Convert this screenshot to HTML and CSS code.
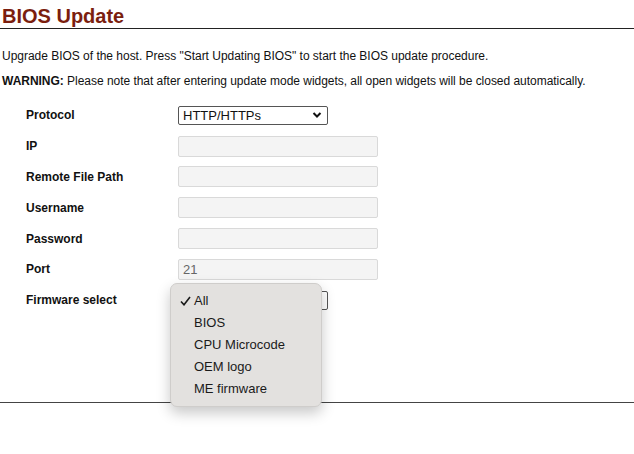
FILE: index.html
```html
<!DOCTYPE html>
<html>
<head>
<meta charset="utf-8">
<link rel="stylesheet" href="styles.css">
</head>
<body>
<div class="page">
  <h1 class="title">BIOS Update</h1>
  <p class="desc">Upgrade BIOS of the host. Press "Start Updating BIOS" to start the BIOS update procedure.</p>
  <p class="desc warn"><b>WARNING:</b> Please note that after entering update mode widgets, all open widgets will be closed automatically.</p>
  <div class="form">
    <div class="row"><span class="label">Protocol</span>
      <div class="select proto"><span>HTTP/HTTPs</span><svg class="chev" viewBox="0 0 10 8" width="10" height="8"><path d="M1.5 2 L5 5.5 L8.5 2" fill="none" stroke="#111" stroke-width="2"/></svg></div>
    </div>
    <div class="row"><span class="label">IP</span><div class="input"></div></div>
    <div class="row"><span class="label">Remote File Path</span><div class="input"></div></div>
    <div class="row"><span class="label">Username</span><div class="input"></div></div>
    <div class="row"><span class="label">Password</span><div class="input"></div></div>
    <div class="row"><span class="label">Port</span><div class="input">21</div></div>
    <div class="row fw"><span class="label">Firmware select</span>
      <div class="select fwsel"><span>All</span><svg class="chev" viewBox="0 0 10 8" width="10" height="8"><path d="M1.5 2 L5 5.5 L8.5 2" fill="none" stroke="#111" stroke-width="2"/></svg>
        <ul class="popup">
          <li class="checked"><svg class="check" viewBox="0 0 11 10" width="11" height="10"><path d="M1 5.5 L4 8.8 L10 1" fill="none" stroke="#1a1a1a" stroke-width="1.6"/></svg>All</li>
          <li>BIOS</li>
          <li>CPU Microcode</li>
          <li>OEM logo</li>
          <li>ME firmware</li>
        </ul>
      </div>
    </div>
  </div>
  <hr class="rule">
</div>
</body>
</html>
```
FILE: styles.css
```css
html, body {
  margin: 0;
  padding: 0;
  background: #fff;
}
body {
  font-family: "Liberation Sans", Arial, sans-serif;
  color: #111;
  width: 634px;
  height: 454px;
  overflow: hidden;
}
.page {
  padding-top: 4px;
}
.title {
  margin: 0;
  padding: 0 0 0 2px;
  font-size: 20px;
  line-height: 24px;
  font-weight: bold;
  color: #7b1e0e;
  border-bottom: 1px solid #222;
}
.desc {
  margin: 20px 0 0 2px;
  font-size: 12px;
  line-height: 14px;
  letter-spacing: -0.02px;
}
.desc.warn {
  margin-top: 11px;
  letter-spacing: -0.03px;
}
.form {
  margin-top: 12px;
  padding-left: 26px;
  display: flex;
  flex-direction: column;
}
.row {
  height: 30.8px;
  display: flex;
  align-items: center;
}
.label {
  width: 152px;
  font-size: 12px;
  font-weight: bold;
}
.input {
  box-sizing: border-box;
  width: 200px;
  height: 21px;
  background: #f4f4f4;
  border: 1px solid #d9d9d9;
  border-radius: 2px;
  font-size: 13px;
  color: #666;
  padding: 0 4px;
  line-height: 19px;
}
.select {
  position: relative;
  box-sizing: border-box;
  width: 150px;
  height: 19px;
  border: 1px solid #555;
  border-radius: 2px;
  background: #fff;
  font-size: 13px;
  line-height: 17px;
  padding: 0 4px;
  display: flex;
  align-items: center;
  justify-content: space-between;
}
.chev {
  margin-right: 1px;
}
.popup {
  position: absolute;
  left: -9px;
  top: -9px;
  width: 152px;
  box-sizing: border-box;
  margin: 0;
  padding: 6px 0;
  list-style: none;
  background: #e3e1df;
  border: 1px solid #cfcdcb;
  border-radius: 7px;
  box-shadow: 0 6px 14px rgba(0,0,0,0.22);
  font-size: 13px;
  color: #1a1a1a;
}
.popup li {
  height: 22px;
  line-height: 22px;
  padding-left: 23px;
  display: flex;
  align-items: center;
}
.popup li.checked {
  padding-left: 9px;
}
.popup .check {
  margin-right: 3px;
  flex: none;
}
.rule {
  margin: 86px 0 0 0;
  border: 0;
  border-top: 1px solid #444;
  height: 0;
}
```
